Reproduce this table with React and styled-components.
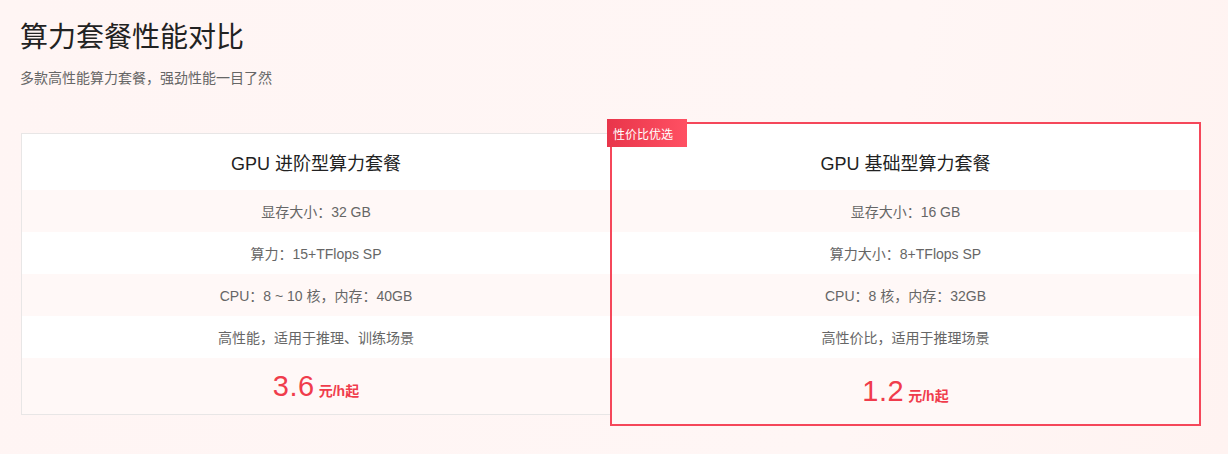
import React from "react";
import styled, { createGlobalStyle } from "styled-components";

const GlobalStyle = createGlobalStyle`
  html, body { margin: 0; padding: 0; }
  body {
    background: #fff5f4;
    font-family: "Liberation Sans", "Noto Sans CJK SC", sans-serif;
    width: 1228px;
    height: 454px;
    overflow: hidden;
  }
`;

const Page = styled.div`
  padding: 18px 20px 0 20px;
  height: 454px;
  box-sizing: border-box;
  background: linear-gradient(100deg, #fff5f4 0%, #fff6f5 70%, #fff3f1 100%);
`;

const Title = styled.h1`
  margin: 0;
  font-size: 28px;
  line-height: 40px;
  font-weight: 400;
  color: #222;
`;

const Subtitle = styled.p`
  margin: 10px 0 0 0;
  font-size: 14px;
  line-height: 20px;
  color: #666;
`;

const Cards = styled.div`
  display: flex;
  align-items: center;
  margin-top: 34px;
  padding-left: 1px;
`;

const Card = styled.div`
  position: relative;
  box-sizing: border-box;
  width: ${(p) => (p.$featured ? "591px" : "590px")};
  margin-left: ${(p) => (p.$featured ? "-1px" : "0")};
  border: ${(p) => (p.$featured ? "2px solid #f5475a" : "1px solid #e8e6e6")};
  background: #fff;
  z-index: ${(p) => (p.$featured ? 2 : 1)};
  display: flex;
  flex-direction: column;
`;

const Badge = styled.div`
  position: absolute;
  top: -5px;
  left: -5px;
  width: 80px;
  height: 28px;
  box-sizing: border-box;
  padding-left: 6px;
  display: flex;
  align-items: center;
  font-size: 12px;
  color: #fff;
  background: linear-gradient(90deg, #e8354a 0%, #ff5063 100%);
`;

const CardTitle = styled.div`
  height: 56px;
  padding-top: ${(p) => (p.$featured ? "10px" : "0")};
  display: flex;
  align-items: center;
  justify-content: center;
  font-size: 18px;
  color: #222;
  background: #fff;
`;

const Row = styled.div`
  height: 42px;
  display: flex;
  align-items: center;
  justify-content: center;
  font-size: 14px;
  color: #666;
  background: ${(p) => (p.$shade ? "#fff8f7" : "#fff")};
`;

const PriceRow = styled.div`
  height: ${(p) => (p.$featured ? "66px" : "56px")};
  display: flex;
  align-items: center;
  justify-content: center;
  background: #fff8f7;
  color: #f03c4c;
`;

const Price = styled.span`
  font-size: 29px;
  line-height: 1;
  letter-spacing: 0.5px;
`;

const Unit = styled.span`
  font-size: 14px;
  font-weight: 700;
  margin-left: 4px;
  align-self: center;
  margin-top: 8px;
`;

const plans = [
  {
    name: "GPU 进阶型算力套餐",
    rows: ["显存大小：32 GB", "算力：15+TFlops SP", "CPU：8 ~ 10 核，内存：40GB", "高性能，适用于推理、训练场景"],
    price: "3.6",
  },
  {
    name: "GPU 基础型算力套餐",
    rows: ["显存大小：16 GB", "算力大小：8+TFlops SP", "CPU：8 核，内存：32GB", "高性价比，适用于推理场景"],
    price: "1.2",
    featured: true,
    badge: "性价比优选",
  },
];

export default function App() {
  return (
    <>
      <GlobalStyle />
      <Page>
        <Title>算力套餐性能对比</Title>
        <Subtitle>多款高性能算力套餐，强劲性能一目了然</Subtitle>
        <Cards>
          {plans.map((p) => (
            <Card key={p.name} $featured={p.featured}>
              {p.badge && <Badge>{p.badge}</Badge>}
              <CardTitle $featured={p.featured}>{p.name}</CardTitle>
              {p.rows.map((r, i) => (
                <Row key={r} $shade={i % 2 === 0}>
                  {r}
                </Row>
              ))}
              <PriceRow $featured={p.featured}>
                <Price>{p.price}</Price>
                <Unit>元/h起</Unit>
              </PriceRow>
            </Card>
          ))}
        </Cards>
      </Page>
    </>
  );
}
